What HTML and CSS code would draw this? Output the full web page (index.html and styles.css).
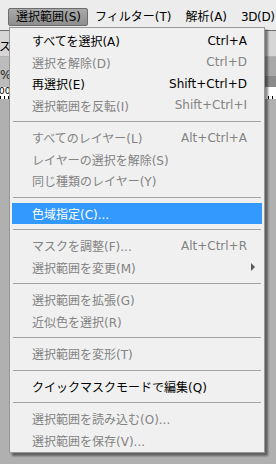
FILE: index.html
```html
<!DOCTYPE html>
<html lang="ja">

<head>
    <meta charset="UTF-8">
    <meta name="viewport" content="width=device-width, initial-scale=1.0">
    <title>選択範囲メニュー</title>
    <link rel="stylesheet" href="styles.css">
</head>

<body>
    <div class="menubar">
        <span class="menubar-item active">選択範囲(S)</span>
        <span class="menubar-item">フィルター(T)</span>
        <span class="menubar-item">解析(A)</span>
        <span class="menubar-item last">3D(D)</span>
    </div>

    <div class="workspace">
        <div class="options-bar"><span class="options-label">スオ</span></div>
        <div class="tab-row"><div class="doc-tab">%</div></div>
        <div class="ruler"><span class="ruler-num">00</span></div>
        <div class="canvas"></div>
    </div>

    <ul class="dropdown">
        <li class="item"><span>すべてを選択(A)</span><span class="shortcut">Ctrl+A</span></li>
        <li class="item disabled"><span>選択を解除(D)</span><span class="shortcut">Ctrl+D</span></li>
        <li class="item"><span>再選択(E)</span><span class="shortcut">Shift+Ctrl+D</span></li>
        <li class="item disabled"><span>選択範囲を反転(I)</span><span class="shortcut">Shift+Ctrl+I</span></li>
        <li class="separator"></li>
        <li class="item disabled"><span>すべてのレイヤー(L)</span><span class="shortcut">Alt+Ctrl+A</span></li>
        <li class="item disabled"><span>レイヤーの選択を解除(S)</span></li>
        <li class="item disabled"><span>同じ種類のレイヤー(Y)</span></li>
        <li class="separator"></li>
        <li class="item selected"><span>色域指定(C)...</span></li>
        <li class="separator"></li>
        <li class="item disabled"><span>マスクを調整(F)...</span><span class="shortcut">Alt+Ctrl+R</span></li>
        <li class="item disabled"><span>選択範囲を変更(M)</span><span class="arrow"></span></li>
        <li class="separator"></li>
        <li class="item disabled"><span>選択範囲を拡張(G)</span></li>
        <li class="item disabled"><span>近似色を選択(R)</span></li>
        <li class="separator"></li>
        <li class="item disabled"><span>選択範囲を変形(T)</span></li>
        <li class="separator"></li>
        <li class="item"><span>クイックマスクモードで編集(Q)</span></li>
        <li class="separator"></li>
        <li class="item disabled"><span>選択範囲を読み込む(O)...</span></li>
        <li class="item disabled"><span>選択範囲を保存(V)...</span></li>
    </ul>
</body>

</html>
```

FILE: styles.css
```css
body {
    margin: 0;
    width: 276px;
    height: 464px;
    overflow: hidden;
    position: relative;
    font-family: 'DejaVu Sans', 'Noto Sans CJK JP', sans-serif;
    font-size: 12px;
    color: #000;
    background-color: #b0b0b0;
}

/* top menu bar */
.menubar {
    display: flex;
    align-items: flex-start;
    height: 31px;
    padding: 8px 0 0 8px;
    box-sizing: border-box;
    background-color: #ececec;
    border-bottom: 1px solid #6f6f6f;
    white-space: nowrap;
    overflow: hidden;
}

.menubar-item {
    height: 18px;
    line-height: 16px;
    padding: 0 6px;
    box-sizing: border-box;
    border: 1px solid transparent;
    border-radius: 2px;
}

.menubar-item.active {
    padding-left: 7px;
    background: linear-gradient(#a9a9a9, #8e8e8e);
    border-color: #6c6c6c;
}

.menubar-item.last {
    letter-spacing: -0.4px;
}

/* application behind the menu */
.workspace {
    display: flex;
    flex-direction: column;
    height: 432px;
}

.options-bar {
    height: 25px;
    background-color: #d6d6d6;
    border-bottom: 1px solid #b2b2b2;
    display: flex;
    align-items: center;
    overflow: hidden;
}

.options-label {
    margin-left: -1px;
    margin-top: 4px;
}

.tab-row {
    height: 30px;
    background: linear-gradient(#a9a9a9 0, #a9a9a9 19px, #8b8b8b 19px);
    display: flex;
}

.doc-tab {
    width: 40px;
    background-color: #bcbcbc;
    display: flex;
    align-items: flex-end;
    padding-bottom: 5px;
    box-sizing: border-box;
    color: #222;
}

.ruler {
    height: 12px;
    background-color: #fff;
    background-image: repeating-linear-gradient(90deg, #000 0, #000 1px, transparent 1px, transparent 4px);
    background-size: 100% 3px;
    background-repeat: no-repeat;
    background-position: bottom;
    font-size: 9px;
    line-height: 9px;
}

.ruler-num {
    margin-left: -1px;
}

.canvas {
    flex: 1;
    background-color: #b0b0b0;
}

/* dropdown menu */
.dropdown {
    position: absolute;
    top: 27px;
    left: 9px;
    width: 256px;
    margin: 0;
    padding: 2px 2px 1px;
    box-sizing: border-box;
    list-style: none;
    background-color: #f0f0f0;
    border: 1px solid #979797;
    box-shadow: 3px 3px 2px rgba(0, 0, 0, 0.45);
}

.item {
    display: flex;
    justify-content: space-between;
    align-items: center;
    height: 21.5px;
    padding: 0 15px 0 20px;
    white-space: nowrap;
}

.item.disabled {
    color: #838383;
}

.item.selected {
    background-color: #3399ff;
    color: #fff;
}

.separator {
    height: 1px;
    margin: 5px 1px;
    background-color: #a3a3a3;
}

.arrow {
    width: 0;
    height: 0;
    margin-right: -8px;
    border-left: 4px solid #5a5a5a;
    border-top: 4px solid transparent;
    border-bottom: 4px solid transparent;
}
```
